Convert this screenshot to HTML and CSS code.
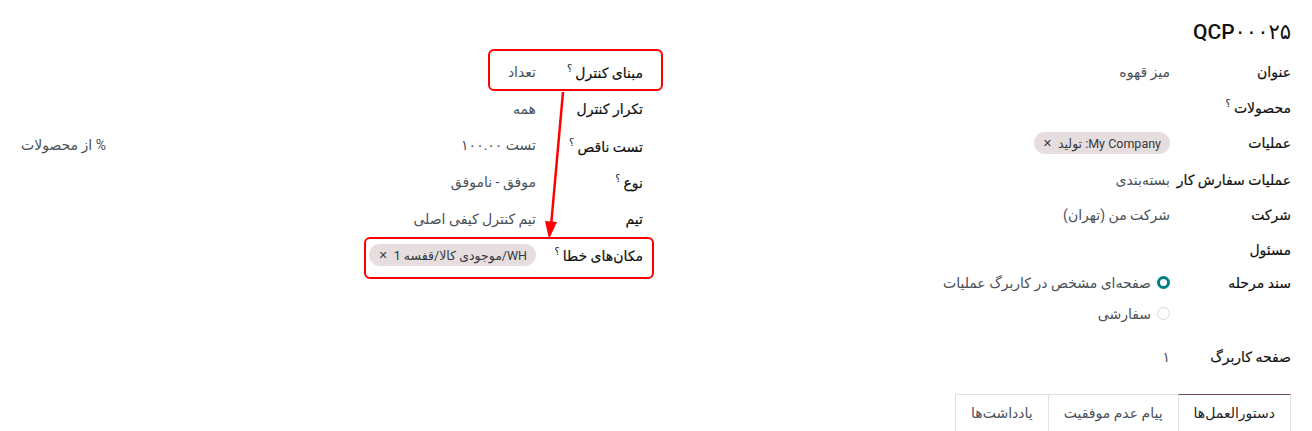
FILE: index.html
```html
<!DOCTYPE html>
<html lang="fa" dir="rtl">
<head>
  <meta charset="UTF-8" />
  <meta name="viewport" content="width=device-width, initial-scale=1.0" />
  <title>نقطه کنترل کیفیت</title>
  <link rel="stylesheet" href="styles.css">
</head>
<body>
  <div class="sheet">
    <h1 class="title">QCP۰۰۰۲۵</h1>

    <div class="groups">
      <div class="group">
        <div class="row">
          <div class="label">عنوان</div>
          <div class="value">میز قهوه</div>
        </div>
        <div class="row">
          <div class="label">محصولات<sup>؟</sup></div>
          <div class="value"></div>
        </div>
        <div class="row tall">
          <div class="label">عملیات</div>
          <div class="value"><span class="tag">My Company: تولید <span class="tag-x">✕</span></span></div>
        </div>
        <div class="row">
          <div class="label">عملیات سفارش کار</div>
          <div class="value">بسته‌بندی</div>
        </div>
        <div class="row">
          <div class="label">شرکت</div>
          <div class="value">شرکت من (تهران)</div>
        </div>
        <div class="row">
          <div class="label">مسئول</div>
          <div class="value"></div>
        </div>
        <div class="row radios">
          <div class="label">سند مرحله</div>
          <div class="value">
            <div class="radio"><span class="dot checked"></span>صفحه‌ای مشخص در کاربرگ عملیات</div>
            <div class="radio"><span class="dot"></span>سفارشی</div>
          </div>
        </div>
        <div class="row page">
          <div class="label">صفحه کاربرگ</div>
          <div class="value">۱</div>
        </div>
      </div>

      <div class="group side">
        <div class="row">
          <div class="label">مبنای کنترل<sup>؟</sup></div>
          <div class="value">تعداد</div>
        </div>
        <div class="row">
          <div class="label">تکرار کنترل</div>
          <div class="value">همه</div>
        </div>
        <div class="row">
          <div class="label">تست ناقص<sup>؟</sup></div>
          <div class="value split"><span>تست ۱۰۰.۰۰</span><span>% از محصولات</span></div>
        </div>
        <div class="row">
          <div class="label">نوع<sup>؟</sup></div>
          <div class="value">موفق - ناموفق</div>
        </div>
        <div class="row">
          <div class="label">تیم</div>
          <div class="value">تیم کنترل کیفی اصلی</div>
        </div>
        <div class="row">
          <div class="label">مکان‌های خطا<sup>؟</sup></div>
          <div class="value"><span class="tag">WH/موجودی کالا/قفسه 1 <span class="tag-x">✕</span></span></div>
        </div>
      </div>
    </div>

    <div class="tabs">
      <div class="tab active">دستورالعمل‌ها</div>
      <div class="tab">پیام عدم موفقیت</div>
      <div class="tab">یادداشت‌ها</div>
    </div>

    <div class="mark mark-top"></div>
    <div class="mark mark-bottom"></div>
    <svg class="arrow" width="40" height="160" viewBox="0 0 40 160">
      <line x1="24" y1="2" x2="12" y2="136" stroke="#f00" stroke-width="2.5" />
      <polygon points="6,131 18,132 10,149" fill="#f00" />
    </svg>
  </div>
</body>
</html>
```

FILE: styles.css
```css
* {
  box-sizing: border-box;
}
body {
  margin: 0;
  font-family: Roboto, "DejaVu Sans", sans-serif;
  font-size: 14px;
  color: #212529;
  background: #fff;
}
.sheet {
  position: relative;
  padding: 18px 21px 0 21px;
  height: 431px;
  overflow: hidden;
}
.title {
  margin: 0 0 8px;
  font-size: 21px;
  font-weight: 500;
  line-height: 28px;
  color: #111;
}
.groups {
  display: flex;
  gap: 26px;
}
.group {
  flex: 1;
}
.row {
  display: flex;
  align-items: center;
  min-height: 35px;
}
.side .row {
  min-height: 36.6px;
}
.label {
  width: 121px;
  flex-shrink: 0;
  white-space: nowrap;
  font-weight: 400;
  font-size: 14px;
  color: #111;
  -webkit-text-stroke: 0.2px #111;
}
.side .label {
  width: 107px;
}
.label sup {
  font-size: 10px;
  -webkit-text-stroke: 0;
  margin-right: 3px;
}
.value {
  flex: 1;
  color: #4a5057;
}
.split {
  display: flex;
  justify-content: space-between;
}
.tag {
  display: inline-flex;
  align-items: center;
  gap: 6px;
  background: #e6dede;
  border-radius: 11px;
  padding: 0 9px;
  height: 22px;
  font-size: 12.5px;
  color: #343a40;
}
.tag-x {
  font-size: 11px;
}
.row.tall {
  min-height: 38px;
}
.radios {
  align-items: flex-start;
}
.radios .label {
  padding-top: 8px;
}
.radio {
  display: flex;
  align-items: center;
  gap: 6px;
  height: 31px;
}
.dot {
  width: 13px;
  height: 13px;
  border-radius: 50%;
  border: 1px solid #d5d8dc;
  background: #fff;
}
.dot.checked {
  border: 3.5px solid #017e84;
}
.row.page {
  margin-top: 10px;
}
.tabs {
  display: flex;
  margin-top: 20px;
}
.tab {
  height: 44px;
  padding: 0 15px;
  display: flex;
  align-items: center;
  border: 1px solid #dee2e6;
  border-right: none;
  color: #495057;
  padding-bottom: 6px;
}
.tab.active {
  border-right: 1px solid #dee2e6;
  border-top-color: #714b67;
  color: #212529;
}
.mark {
  position: absolute;
  border: 2.5px solid #f00;
  border-radius: 6px;
}
.mark-top {
  left: 488px;
  top: 49px;
  width: 175px;
  height: 42px;
}
.mark-bottom {
  left: 364px;
  top: 237px;
  width: 290px;
  height: 42px;
}
.arrow {
  position: absolute;
  left: 539px;
  top: 90px;
}
```
